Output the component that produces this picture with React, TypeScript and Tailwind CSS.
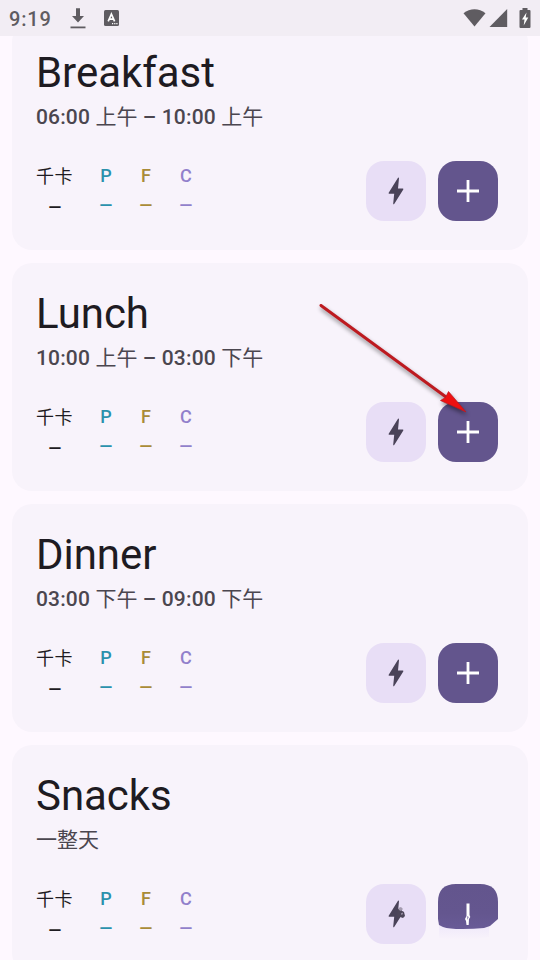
import React from 'react'

interface Meal {
  name: string
  time: string
}

const meals: Meal[] = [
  { name: 'Breakfast', time: '06:00 上午 – 10:00 上午' },
  { name: 'Lunch', time: '10:00 上午 – 03:00 下午' },
  { name: 'Dinner', time: '03:00 下午 – 09:00 下午' },
  { name: 'Snacks', time: '一整天' }
]

const macros = [
  { label: 'P', color: 'text-[#2b91ac]' },
  { label: 'F', color: 'text-[#a98b38]' },
  { label: 'C', color: 'text-[#9180cb]' }
]

const StatusBar: React.FC = () => (
  <header className="flex h-9 shrink-0 items-center bg-[#f2edf4] pl-[9px] pr-[9px] text-[#5f5c61]">
    <span className="w-[61px] pt-0.5 text-[20px] leading-9 font-[480] tracking-[0.8px]">9:19</span>
    <svg className="h-6 w-4" viewBox="0 0 16 24" fill="currentColor">
      <path d="M6 2.200h4V10h4l-6 6.500L2 10h4z" />
      <path d="M.5 20.500h15v1.800H.5z" />
    </svg>
    <svg className="ml-[18px] h-4 w-[15px]" viewBox="0 0 15 16">
      <rect width="15" height="16" rx="1.5" fill="currentColor" />
      <path d="M4.200 11.300 7.400 4l3.200 7.300M5.200 9.200h4.400" fill="none" stroke="#fff" strokeWidth="1.7" />
      <path d="M8 13h1.200v1.200H8zM10.200 13h1.200v1.200h-1.200zM12.300 13h1.200v1.200h-1.200z" fill="#fff" />
    </svg>
    <div className="ml-auto flex items-center">
      <svg className="h-[18px] w-[23px]" viewBox="0 0 23 18" fill="currentColor">
        <path d="M.5 4.200C7-1 16-1 22.500 4.200L11.500 17.500z" />
      </svg>
      <svg className="ml-[3px] h-[18px] w-[19px]" viewBox="0 0 19 18" fill="currentColor">
        <path d="M.5 18 18.200 0V18z" />
      </svg>
      <svg className="ml-[11px] h-5 w-3" viewBox="0 0 12 20">
        <path d="M3.500 0h5v2h2q1 0 1 1v16q0 1-1 1h-9q-1 0-1-1V3q0-1 1-1h2z" fill="currentColor" />
        <path d="M7.500 4.500 3 11.500h2.500L4.700 17.500 9.300 9.500H6.700z" fill="#fff" />
      </svg>
    </div>
  </header>
)

const BoltIcon: React.FC<{ smudged: boolean }> = ({ smudged }) => (
  <svg className="h-[28px] w-[17px]" viewBox="0 0 17 28">
    <path
      d="M10 .7.700 15.800q-.5 1 .5 1H6.200L5.200 26.500q.1 1.300 1 .6L15.300 12.500q.4-1-.6-1H10L11 1.200Q10.800 0 10 .7z"
      fill="#4a4359"
    />
    {smudged && (
      <g>
        <path d="m10 9 3-1 1 3 2 1 1 4-2 2-3-1-2 2-1-5z" fill="#4d4659" />
        <path d="m10 8 3-1 2 2-2 2-2-1zM13 13.500l1.500-1 .5 1.500-1.500 1z" fill="#a49baf" />
      </g>
    )}
  </svg>
)

const AddButton: React.FC = () => (
  <button className="flex size-[60px] items-center justify-center rounded-[18px] bg-[#63558d]">
    <svg className="size-[22px]" viewBox="0 0 22 22" fill="#fff">
      <path d="M9.600 0h2.800v9.600H22v2.800h-9.600V22H9.600v-9.600H0V9.600h9.600z" />
    </svg>
  </button>
)

// The lower part of the last button fades into the page
const FadedAddButton: React.FC = () => (
  <button className="size-[60px]">
    <svg className="size-[60px]" viewBox="0 0 60 60">
      <defs>
        <linearGradient id="fade" x1="0" y1="0" x2="0" y2="1">
          <stop offset="0" stopColor="#63558d" />
          <stop offset=".65" stopColor="#64568f" />
          <stop offset="1" stopColor="#695b97" />
        </linearGradient>
        <linearGradient id="haze" x1="0" y1="0" x2="0" y2="1">
          <stop offset="0" stopColor="#f0e9fa" />
          <stop offset="1" stopColor="#f8f3fb" />
        </linearGradient>
      </defs>
      <path d="M1 42h50v11q-25 5-50 1z" fill="url(#haze)" />
      <path
        d="M18 0h24q18 0 18 18v17l-8 7-6 2q-10 1-22 1-13 0-19-2l-4-2-1-6V18Q0 0 18 0z"
        fill="url(#fade)"
      />
      <path d="M28.500 19.500h3V31l.8 2-1.300 2-.3 6h-2.200l-.5-4-1-2 1.500-3z" fill="#fff" />
      <path d="m29 32 2 1-2 3z" fill="#a49abf" />
    </svg>
  </button>
)

// Digits are drawn heavier than the Chinese characters
const TimeText: React.FC<{ text: string }> = ({ text }) => (
  <p className="h-[33px] pt-px text-[21px] leading-[33px] whitespace-nowrap text-[#4b464f]">
    {text.split(/([\u4e00-\u9fff]+)/).map((part, idx) => (
      <span key={idx} className={idx % 2 ? 'font-normal' : 'font-[480] tracking-[0.15px]'}>
        {part}
      </span>
    ))}
  </p>
)

const MealCard: React.FC<{ meal: Meal; last: boolean }> = ({ meal, last }) => (
  <section className="h-[228px] shrink-0 rounded-[20px] bg-[#f8f3fb] pt-6 pr-[30px] pl-6">
    <h2 className="text-[42px] leading-[54px] tracking-[-0.05px] text-[#1e1b22]">{meal.name}</h2>
    <TimeText text={meal.time} />
    <div className="mt-7 flex justify-between">
      <div className="flex gap-7 pt-px text-center text-[18px] leading-[28px] whitespace-nowrap">
        <div className="w-9 text-[#1e1b22]">
          <div className="h-[33px] pt-px tracking-[0.5px]">千卡</div>
          <div className="-mr-0.5 text-[23px]">–</div>
        </div>
        {macros.map((macro) => (
          <div key={macro.label} className={`flex w-3 flex-col items-center ${macro.color}`}>
            <div className="h-[31px] font-medium">{macro.label}</div>
            <div className="text-[23px]">–</div>
          </div>
        ))}
      </div>
      <div className="flex gap-3">
        <button className="flex size-[60px] items-center justify-center rounded-[18px] bg-[#e8def6]">
          <BoltIcon smudged={last} />
        </button>
        {last ? <FadedAddButton /> : <AddButton />}
      </div>
    </div>
  </section>
)

const Arrow: React.FC = () => (
  <svg className="pointer-events-none absolute top-[295px] left-[310px] h-[130px] w-[170px]" viewBox="310 295 170 130">
    <g className="drop-shadow-[1px_3px_2px_rgba(0,0,0,0.45)]">
      <path d="M321 305.500 446 397" stroke="#bd1a20" strokeWidth="3" strokeLinecap="round" />
      <path d="M466 412 440.500 400.500 445.500 397.500 448.500 391.500z" fill="#ee1111" stroke="#b91820" strokeWidth=".7" />
    </g>
  </svg>
)

const App: React.FC = () => {
  return (
    <div className="relative flex h-[960px] w-[540px] flex-col overflow-hidden bg-[#fef8ff] font-[Roboto,'Noto_Sans_CJK_SC',sans-serif]">
      <StatusBar />
      <main className="min-h-0 flex-1 overflow-hidden px-3">
        {/* List is scrolled slightly under the status bar */}
        <div className="-mt-3.5 flex flex-col gap-[13px]">
          {meals.map((meal, idx) => (
            <MealCard key={meal.name} meal={meal} last={idx === meals.length - 1} />
          ))}
        </div>
      </main>
      <Arrow />
    </div>
  )
}

export default App
